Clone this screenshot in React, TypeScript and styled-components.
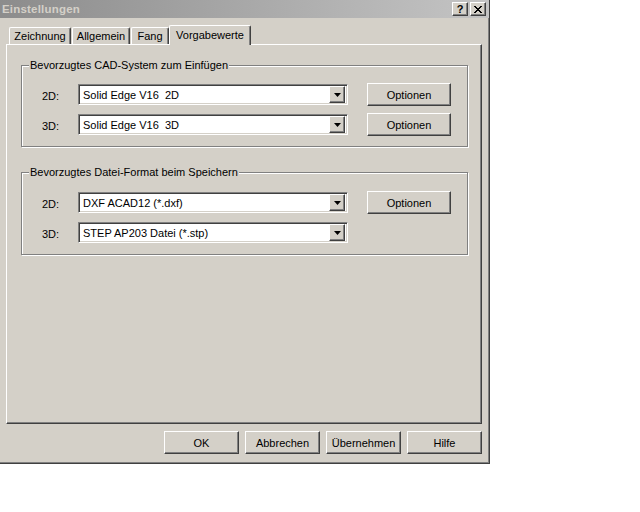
import { createGlobalStyle, styled } from "styled-components";

const GlobalStyle = createGlobalStyle`
  html, body {
    margin: 0;
    padding: 0;
    background: #ffffff;
  }
  body {
    font-family: "Liberation Sans", Arial, sans-serif;
    font-size: 11px;
    color: #000000;
  }
`;

interface Choice {
  label: string;
  value: string;
  hasOptions: boolean;
}

interface Group {
  title: string;
  padTop: number;
  rows: Choice[];
}

const groups: Group[] = [
  {
    title: "Bevorzugtes CAD-System zum Einfügen",
    padTop: 11,
    rows: [
      { label: "2D:", value: "Solid Edge V16  2D", hasOptions: true },
      { label: "3D:", value: "Solid Edge V16  3D", hasOptions: true },
    ],
  },
  {
    title: "Bevorzugtes Datei-Format beim Speichern",
    padTop: 12,
    rows: [
      { label: "2D:", value: "DXF ACAD12 (*.dxf)", hasOptions: true },
      { label: "3D:", value: "STEP AP203 Datei (*.stp)", hasOptions: false },
    ],
  },
];

const tabs = [
  { name: "Zeichnung", width: 62 },
  { name: "Allgemein", width: 58 },
  { name: "Fang", width: 38 },
  { name: "Vorgabewerte", width: 78 },
];

const App = () => {
  const active = "Vorgabewerte";
  return (
    <>
      <GlobalStyle />
      <WindowStyled>
        <TitleBarStyled>
          <TitleTextStyled>Einstellungen</TitleTextStyled>
          <CaptionBtnStyled>?</CaptionBtnStyled>
          <CaptionBtnStyled $gap>
            <svg width="8" height="7" viewBox="0 0 8 7">
              <path d="M0 0 L7 7 M1 0 L8 7 M7 0 L0 7 M8 0 L1 7" stroke="#000" strokeWidth="1" />
            </svg>
          </CaptionBtnStyled>
        </TitleBarStyled>
        <BodyStyled>
          <TabRowStyled>
            {tabs.map((t) => (
              <TabStyled key={t.name} $width={t.width} $active={t.name === active}>
                {t.name}
              </TabStyled>
            ))}
          </TabRowStyled>
          <PanelStyled>
            {groups.map((g) => (
              <GroupStyled key={g.title} $padTop={g.padTop}>
                <LegendStyled>{g.title}</LegendStyled>
                {g.rows.map((r) => (
                  <RowStyled key={r.label}>
                    <LabelStyled>{r.label}</LabelStyled>
                    <ComboStyled>
                      <ComboTextStyled>{r.value}</ComboTextStyled>
                      <ArrowBtnStyled>
                        <svg width="7" height="4" viewBox="0 0 7 4">
                          <path d="M0 0 H7 L3.5 4 Z" fill="#000" />
                        </svg>
                      </ArrowBtnStyled>
                    </ComboStyled>
                    {r.hasOptions && <ButtonStyled $width={84}>Optionen</ButtonStyled>}
                  </RowStyled>
                ))}
              </GroupStyled>
            ))}
          </PanelStyled>
          <FooterStyled>
            <ButtonStyled $width={75}>OK</ButtonStyled>
            <ButtonStyled $width={75}>Abbrechen</ButtonStyled>
            <ButtonStyled $width={75}>Übernehmen</ButtonStyled>
            <ButtonStyled $width={75}>Hilfe</ButtonStyled>
          </FooterStyled>
        </BodyStyled>
      </WindowStyled>
    </>
  );
};

const WindowStyled = styled.div`
  width: 489px;
  height: 463px;
  background: #d4d0c8;
  border-right: 1px solid #404040;
  border-bottom: 1px solid #404040;
  box-shadow: inset -1px -1px 0 #808080;
  display: flex;
  flex-direction: column;
`;

const TitleBarStyled = styled.div`
  height: 18px;
  background: linear-gradient(to right, #8c8c8c, #c4c4c4);
  display: flex;
  align-items: center;
  padding: 0 3px 0 2px;
`;

const TitleTextStyled = styled.div`
  flex: 1;
  color: #d4d0c8;
  font-weight: bold;
  font-size: 11.5px;
  letter-spacing: 0.2px;
`;

const CaptionBtnStyled = styled.div<{ $gap?: boolean }>`
  width: 14px;
  height: 12px;
  margin-left: ${(p) => (p.$gap ? "2px" : "0")};
  background: #d4d0c8;
  border: 1px solid;
  border-color: #ffffff #404040 #404040 #ffffff;
  box-shadow: inset -1px -1px 0 #808080;
  display: flex;
  align-items: center;
  justify-content: center;
  font-weight: bold;
  font-size: 11px;
  line-height: 12px;
`;

const BodyStyled = styled.div`
  flex: 1;
  display: flex;
  flex-direction: column;
  padding: 7px 7px 0 6px;
`;

const TabRowStyled = styled.div`
  height: 19px;
  display: flex;
  align-items: flex-end;
  padding-left: 3px;
`;

const TabStyled = styled.div<{ $width: number; $active: boolean }>`
  box-sizing: border-box;
  width: ${(p) => p.$width + (p.$active ? 4 : 0)}px;
  height: ${(p) => (p.$active ? 20 : 17)}px;
  margin: ${(p) => (p.$active ? "0 -2px -1px -1px" : "0 1px 0 0")};
  position: relative;
  z-index: ${(p) => (p.$active ? 1 : 0)};
  background: #d4d0c8;
  border-top: 1px solid #ffffff;
  border-left: 1px solid #ffffff;
  border-right: 1px solid #404040;
  border-radius: 2px 2px 0 0;
  box-shadow: inset -1px 0 0 #808080;
  display: flex;
  align-items: ${(p) => (p.$active ? "flex-start" : "center")};
  justify-content: center;
  padding-top: ${(p) => (p.$active ? "3px" : "0")};
  white-space: nowrap;
`;

const PanelStyled = styled.div`
  height: 380px;
  box-sizing: border-box;
  border: 1px solid;
  border-color: #ffffff #404040 #404040 #ffffff;
  box-shadow: inset -1px -1px 0 #808080;
  padding: 14px 13px 0 14px;
  display: flex;
  flex-direction: column;
  gap: 19px;
`;

const GroupStyled = styled.fieldset<{ $padTop: number }>`
  margin: 0;
  min-inline-size: 0;
  border: 1px solid #808080;
  box-shadow: 1px 1px 0 #ffffff, inset 1px 1px 0 #ffffff;
  padding: ${(p) => p.$padTop}px 0 10px 0;
  display: flex;
  flex-direction: column;
  gap: 7px;
`;

const LegendStyled = styled.legend`
  margin-left: 7px;
  padding: 0 1px;
  background: #d4d0c8;
  line-height: 13px;
`;

const RowStyled = styled.div`
  height: 23px;
  padding-left: 20px;
  display: grid;
  grid-template-columns: 36px 270px 19px 84px;
  align-items: center;
  & > :nth-child(3) {
    grid-column: 4;
  }
`;

const LabelStyled = styled.div`
  padding-top: 2px;
`;

const ComboStyled = styled.div`
  box-sizing: border-box;
  height: 21px;
  background: #ffffff;
  border: 1px solid;
  border-color: #808080 #ffffff #ffffff #808080;
  box-shadow: inset 1px 1px 0 #404040, inset -1px -1px 0 #d4d0c8;
  display: flex;
  align-items: center;
  padding: 2px 2px 2px 4px;
`;

const ComboTextStyled = styled.div`
  flex: 1;
  white-space: pre;
`;

const ArrowBtnStyled = styled.div`
  box-sizing: border-box;
  width: 16px;
  height: 17px;
  background: #d4d0c8;
  border: 1px solid;
  border-color: #ffffff #404040 #404040 #ffffff;
  box-shadow: inset -1px -1px 0 #808080;
  display: flex;
  align-items: center;
  justify-content: center;
`;

const ButtonStyled = styled.div<{ $width: number }>`
  box-sizing: border-box;
  width: ${(p) => p.$width}px;
  height: 23px;
  background: #d4d0c8;
  border: 1px solid;
  border-color: #ffffff #404040 #404040 #ffffff;
  box-shadow: inset -1px -1px 0 #808080;
  display: flex;
  align-items: center;
  justify-content: center;
`;

const FooterStyled = styled.div`
  margin-top: 7px;
  display: flex;
  justify-content: flex-end;
  gap: 6px;
`;

export default App;
